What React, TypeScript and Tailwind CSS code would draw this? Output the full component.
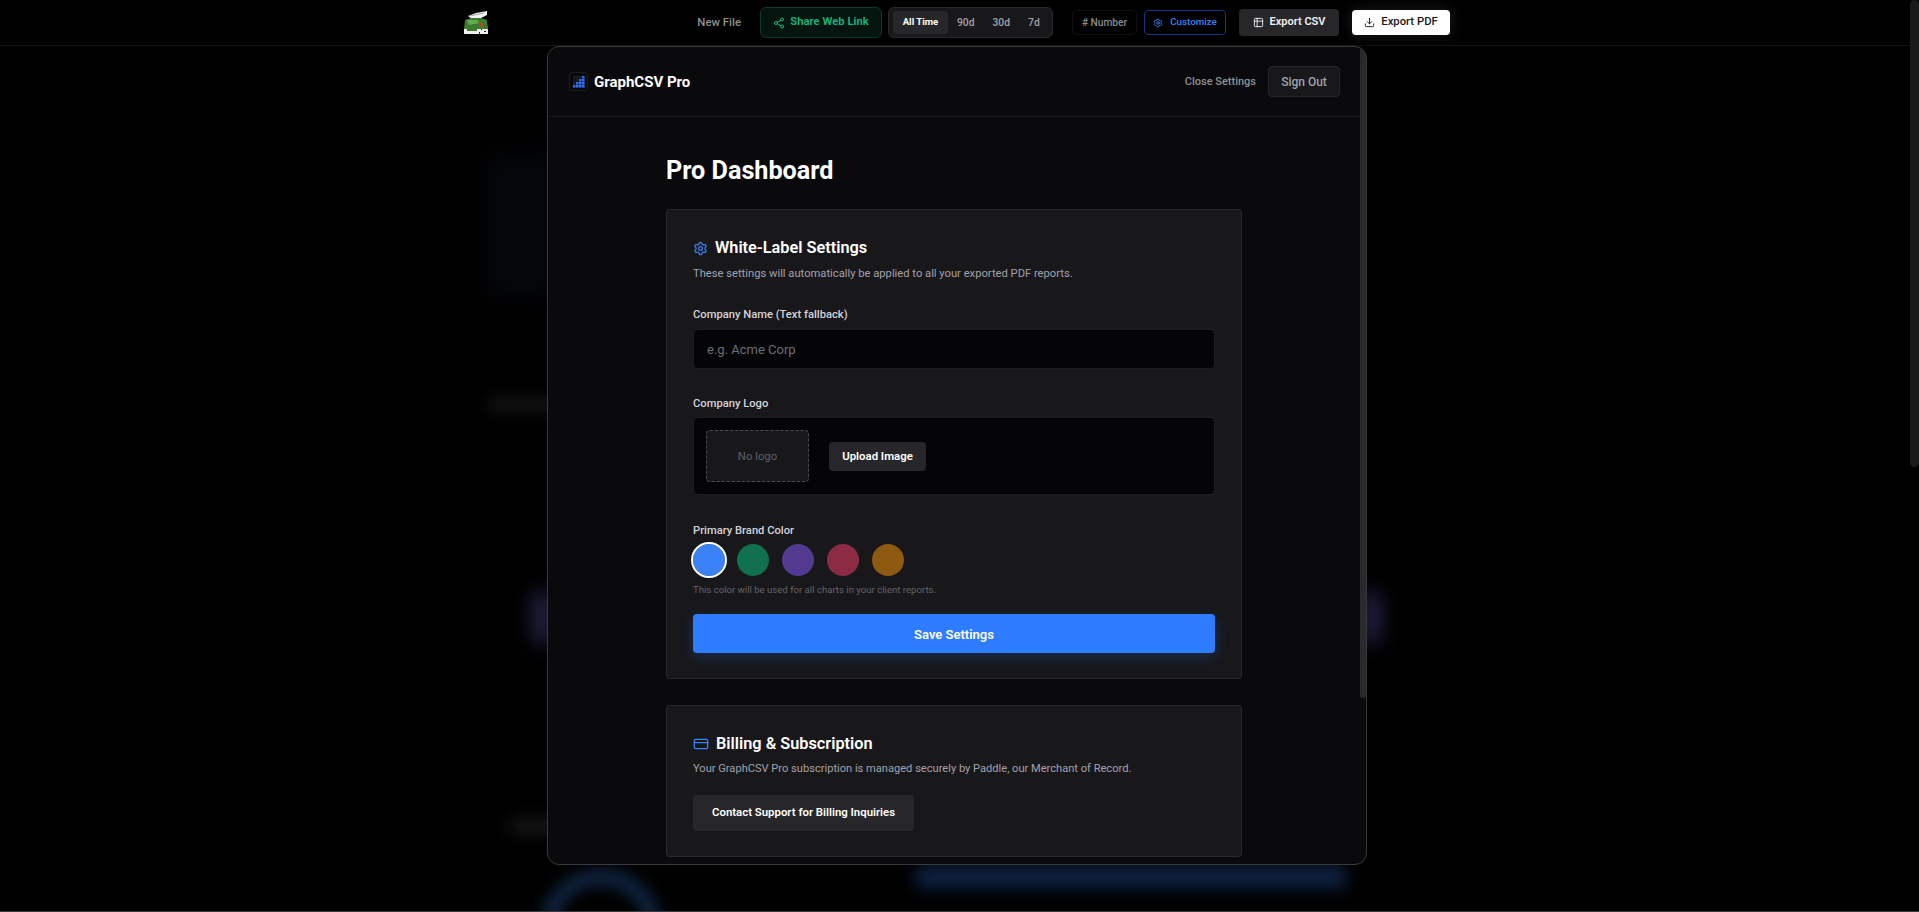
import { Download, Settings, Share2, Table2, CreditCard } from 'lucide-react'

const font = { fontFamily: 'Roboto, "Noto Sans", sans-serif' }

const swatches = ['bg-[#11704f]', 'bg-[#533a91]', 'bg-[#8c2c44]', 'bg-[#8c5a10]']

// pixel frog with chef hat, top bar logo
function FrogLogo() {
  return (
    <svg width="24" height="23" viewBox="0 0 24 23" className="shrink-0">
      <path d="M4 5 L12 2 L23 0 L23 4 L17 7 L8 8 Z" fill="#f2f2f2" />
      <path d="M6 5 L20 2" stroke="#a8a8a8" strokeWidth="1" />
      <path d="M1 9 L7 7 L17 7 L23 9 L24 18 L0 18 Z" fill="#3d7a30" />
      <path d="M3 9 L13 9 L15 12 L5 14 Z" fill="#62ad4b" />
      <path d="M15 12 h4 v4 h-4 Z" fill="#a4502f" />
      <rect x="0" y="18" width="24" height="5" fill="#f0f0f0" />
      <rect x="3" y="18" width="10" height="2" fill="#3d7a30" />
      <rect x="17" y="18" width="1" height="1" fill="#222" />
      <rect x="20" y="20" width="2" height="1" fill="#222" />
      <rect x="15" y="21" width="1" height="2" fill="#222" />
    </svg>
  )
}

// stepped bar grid used by the GraphCSV mark
function GridLogo() {
  const cells = []
  for (let x = 0; x < 4; x++) {
    for (let y = 0; y < 4; y++) {
      const lit = x === 3 || (x === 2 && y >= 1) || (x === 1 && y >= 2) || (x === 0 && y === 3)
      cells.push(
        <rect
          key={`${x}${y}`}
          x={x * 3}
          y={y * 3}
          width="2.6"
          height="2.6"
          fill={lit ? '#2f6ff0' : '#1d1d24'}
        />,
      )
    }
  }
  return (
    <div className="flex h-[19px] w-[19px] items-center justify-center rounded-[3px] border border-[#1c1c20] bg-[#08080a]">
      <svg width="12" height="12" viewBox="0 0 12 12">
        {cells}
      </svg>
    </div>
  )
}

function TopBar() {
  return (
    <header className="flex h-[46px] items-center border-b border-[#141416] bg-black pl-[464px] pr-[469px]">
      <FrogLogo />
      <div className="ml-auto flex items-center">
        <span className="mr-[19px] text-[11.4px] font-medium text-[#8f8f8f]">New File</span>
        <button className="flex h-[31px] w-[122px] items-center justify-center gap-[5px] rounded-md border border-[#0d3b2a] bg-[#04140e] text-[11.3px] font-semibold text-[#10b981]">
          <Share2 size={12} />
          Share Web Link
        </button>
        <div className="ml-1.5 flex h-[31px] w-[165px] items-center rounded-md border border-[#2a2a2d] bg-[#18181b] px-1 text-[10.3px] font-medium text-[#a1a1aa]">
          <span className="flex h-[23px] w-[55px] items-center justify-center rounded bg-[#27272a] text-[9.6px] font-bold text-white">
            All Time
          </span>
          <span className="ml-[9px]">90d</span>
          <span className="ml-[18px]">30d</span>
          <span className="ml-[18px]">7d</span>
        </div>
        <div className="ml-[19px] flex h-[25px] w-[65px] items-center justify-center rounded border border-[#101012] text-[10.2px] font-medium text-[#8a8a8a]">
          # Number
        </div>
        <button className="ml-[7px] flex h-[25px] w-[82px] items-center justify-center gap-[7px] rounded border border-[#123a80] text-[9.8px] font-medium text-[#3b82f6]">
          <Settings size={10} />
          Customize
        </button>
        <button className="ml-[13px] flex h-[27px] w-[100px] items-center justify-center gap-1.5 rounded bg-[#27272a] text-[11px] font-semibold text-[#f0f0f0]">
          <Table2 size={11} />
          Export CSV
        </button>
        <button className="ml-[13px] flex h-[25px] w-[98px] items-center justify-center gap-1.5 rounded bg-white text-[11.3px] font-medium text-[#18181b] shadow-[0_0_14px_rgba(255,255,255,0.12)]">
          <Download size={11} />
          Export PDF
        </button>
      </div>
    </header>
  )
}

// what is left of the dashboard behind the modal, blurred away
function BlurredPage() {
  return (
    <div className="pointer-events-none absolute inset-0 overflow-hidden">
      <div className="absolute left-[488px] top-[155px] h-[140px] w-[70px] bg-[#05070c] blur-[12px]" />
      <div className="absolute left-[488px] top-[398px] h-[14px] w-[70px] bg-[#151515] blur-[8px]" />
      <div className="absolute left-[533px] top-[590px] h-[55px] w-[20px] rounded-full bg-[#26254a] blur-[10px]" />
      <div className="absolute left-[1362px] top-[590px] h-[55px] w-[18px] rounded-full bg-[#26254a] blur-[10px]" />
      <div className="absolute left-[510px] top-[818px] h-[16px] w-[50px] bg-[#171717] blur-[8px]" />
      <div className="absolute left-[541px] top-[870px] h-[120px] w-[120px] rounded-full border-[14px] border-[#132b4c] blur-[8px]" />
      <div className="absolute left-[916px] top-[866px] h-[22px] w-[430px] bg-[#0e2344] blur-[8px]" />
    </div>
  )
}

function Label({ children }: { children: React.ReactNode }) {
  return <p className="-mb-0.5 text-[11.2px] leading-[18px] font-medium text-[#d4d4d8]">{children}</p>
}

function SettingsCard() {
  return (
    <section className="h-[470px] rounded border border-[#2c2c30] bg-[#18181b] px-[26px] pt-[26px]">
      <div className="flex h-[24px] items-center gap-[7px]">
        <Settings size={15} className="text-[#3b82f6]" />
        <h2 className="text-[16.3px] font-semibold text-white">White-Label Settings</h2>
      </div>
      <p className="mt-[6px] text-[11.2px] leading-4 text-[#a1a1aa]">
        These settings will automatically be applied to all your exported PDF reports.
      </p>
      <div className="mt-[24px]">
        <Label>Company Name (Text fallback)</Label>
        <div className="mt-[7px] flex h-10 items-center rounded-sm border border-[#1e1e21] bg-[#050507] px-[13px] pt-0.5 text-[13px] text-[#6e6e73]">
          e.g. Acme Corp
        </div>
      </div>
      <div className="mt-[26px]">
        <Label>Company Logo</Label>
        <div className="mt-[6px] flex h-[78px] items-center gap-5 rounded-sm border border-[#1e1e21] bg-[#050507] px-3">
          <div className="flex h-[52px] w-[103px] items-center justify-center rounded-sm border border-dashed border-[#4a4a50] bg-[#18181b] pt-0.5 text-[11.3px] text-[#5f5f66]">
            No logo
          </div>
          <button className="flex h-[29px] w-[97px] items-center justify-center rounded-sm bg-[#27272a] pt-0.5 text-[11.4px] font-semibold text-white">
            Upload Image
          </button>
        </div>
      </div>
      <div className="mt-[27px]">
        <Label>Primary Brand Color</Label>
        <div className="mt-[6px] flex items-center gap-[13px]">
          <span className="-mr-px h-8 w-8 rounded-full bg-[#3b82f6] outline-2 outline-white" />
          {swatches.map((c) => (
            <span key={c} className={`h-8 w-8 rounded-full ${c}`} />
          ))}
        </div>
        <p className="mt-[6px] text-[9.6px] leading-4 text-[#63636a]">
          This color will be used for all charts in your client reports.
        </p>
      </div>
      <button className="mt-[16px] flex h-[39px] w-full items-center justify-center rounded-sm bg-[#2e7cff] pt-0.5 text-[13px] font-semibold text-white shadow-[0_4px_14px_rgba(46,124,255,0.22)]">
        Save Settings
      </button>
    </section>
  )
}

function BillingCard() {
  return (
    <section className="mt-[26px] h-[152px] rounded border border-[#2c2c30] bg-[#18181b] px-[26px] pt-[26px]">
      <div className="flex h-[24px] items-center gap-[7px]">
        <CreditCard size={16} className="text-[#3b82f6]" />
        <h2 className="text-[16.3px] font-semibold text-white">Billing &amp; Subscription</h2>
      </div>
      <p className="mt-[5px] text-[11.1px] leading-4 text-[#a1a1aa]">
        Your GraphCSV Pro subscription is managed securely by Paddle, our Merchant of Record.
      </p>
      <button className="mt-[18px] flex h-9 w-[221px] items-center justify-center rounded-sm bg-[#27272a] text-[11.4px] font-semibold text-white">
        Contact Support for Billing Inquiries
      </button>
    </section>
  )
}

function Modal() {
  return (
    <div className="absolute left-[547px] top-[46px] flex h-[819px] w-[820px] flex-col overflow-hidden rounded-xl border border-[#3a3a3d] bg-[#0a0a0c]">
      <div className="flex h-[70px] shrink-0 items-center border-b border-[#18181b] pl-[21px] pr-[26px]">
        <GridLogo />
        <span className="ml-[6px] mt-px text-[15px] font-bold text-white">GraphCSV Pro</span>
        <span className="ml-auto pt-0.5 text-[11px] font-medium text-[#8f8f94]">Close Settings</span>
        <button className="ml-3 h-[31px] w-[72px] rounded-sm border border-[#27272a] bg-[#18181b] text-xs font-medium text-[#a1a1aa]">
          Sign Out
        </button>
      </div>
      <div className="flex-1 overflow-hidden pl-[118px]">
        <h1 className="mt-[39px] text-[25.2px] font-bold leading-[30px] text-white">Pro Dashboard</h1>
        <div className="mt-[23px] w-[576px]">
          <SettingsCard />
          <BillingCard />
        </div>
      </div>
      <div className="absolute right-0 top-0 h-[651px] w-1.5 rounded-full bg-[#2a2a2d]" />
    </div>
  )
}

export default function App() {
  return (
    <div style={font} className="relative h-[912px] w-full overflow-hidden bg-black">
      <TopBar />
      <BlurredPage />
      <Modal />
      {/* page scrollbar thumb and the window's bottom edge */}
      <div className="absolute right-0 top-0 h-[467px] w-[9px] rounded-full bg-[#1a1a1c]" />
      <div className="absolute bottom-0 left-0 h-px w-full bg-[#3a3a3a]" />
    </div>
  )
}
